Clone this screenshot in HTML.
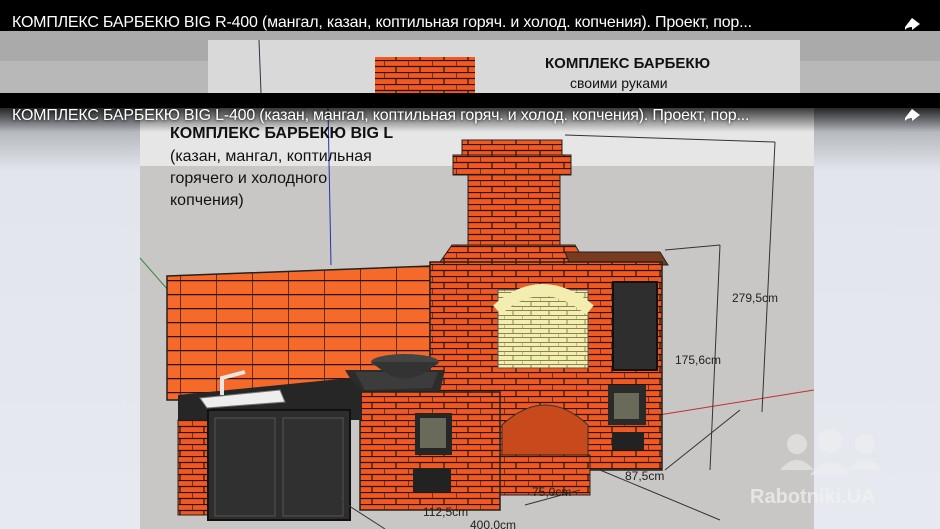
<!DOCTYPE html><html><head><meta charset="utf-8"><style>
html,body{margin:0;padding:0;width:940px;height:529px;overflow:hidden;background:#000;font-family:"Liberation Sans","Noto Sans CJK SC",sans-serif}
.t{position:absolute;left:12px;color:#fff;font-size:16px;white-space:nowrap;letter-spacing:-0.2px}
</style></head><body>
<svg width="940" height="529" style="position:absolute;left:0;top:0" xmlns="http://www.w3.org/2000/svg">
<defs>
<pattern id="br" width="24" height="12" patternUnits="userSpaceOnUse">
<rect width="24" height="12" fill="#f05a22"/>
<path d="M0 0.5H24M0 6.5H24M0 0V6M12 6V12" stroke="#2a1208" stroke-width="1.2"/>
</pattern>
<pattern id="bw" width="36" height="14" patternUnits="userSpaceOnUse">
<rect width="36" height="14" fill="#f56a2a"/>
<path d="M0 0.5H36M0 0V14" stroke="#2a1208" stroke-width="1.4"/>
</pattern>
<pattern id="by" width="18" height="9" patternUnits="userSpaceOnUse">
<rect width="18" height="9" fill="#f3eeb0"/>
<path d="M0 0.5H18M0 4.5H18M0 0V4M9 4V9" stroke="#8a8450" stroke-width="1"/>
</pattern>
<linearGradient id="lm" x1="0" y1="0" x2="0" y2="1"><stop offset="0" stop-color="#9a9da2"/><stop offset="0.15" stop-color="#e2e6ec"/><stop offset="1" stop-color="#e6eaf0"/></linearGradient>
<linearGradient id="ov" x1="0" y1="0" x2="0" y2="1"><stop offset="0" stop-color="#000" stop-opacity=".75"/><stop offset="1" stop-color="#000" stop-opacity="0"/></linearGradient>
</defs>
<rect x="0" y="31" width="940" height="62" fill="#b8b8b8"/>
<rect x="0" y="31" width="940" height="30" fill="#9c9c9c" opacity=".5"/>
<rect x="208" y="40" width="592" height="53" fill="#d9d9d9"/>
<line x1="259" y1="40" x2="261" y2="93" stroke="#334" stroke-width="1"/>
<rect x="375" y="57" width="100" height="36" fill="url(#br)"/>
<text x="545" y="68" font-family="Liberation Sans" font-weight="bold" font-size="15" fill="#111">КОМПЛЕКС БАРБЕКЮ</text>
<text x="570" y="88" font-family="Liberation Sans" font-size="14" fill="#111">своими руками</text>
<rect x="0" y="108" width="940" height="421" fill="url(#lm)"/>
<rect x="140" y="108" width="674" height="421" fill="#c9c7c5"/>
<rect x="140" y="108" width="674" height="58" fill="#e6e6e6"/>
<line x1="328" y1="108" x2="331" y2="265" stroke="#2233aa" stroke-width="1"/>
<line x1="140" y1="258" x2="168" y2="290" stroke="#3a8a4a" stroke-width="1"/>
<line x1="640" y1="418" x2="814" y2="390" stroke="#c03030" stroke-width="1"/>
<polygon points="167,276 430,266 430,400 167,400" fill="url(#bw)" stroke="#222" stroke-width="1.5"/>
<rect x="462" y="140" width="100" height="32" fill="url(#br)" stroke="#222"/>
<rect x="453" y="155" width="118" height="20" fill="url(#br)" stroke="#222"/>
<rect x="468" y="175" width="92" height="70" fill="url(#br)" stroke="#222"/>
<polygon points="452,245 575,245 585,262 440,262" fill="url(#br)" stroke="#222"/>
<polygon points="565,252 660,252 668,265 570,265" fill="#7a3a20" stroke="#222"/>
<rect x="430" y="262" width="232" height="208" fill="url(#br)" stroke="#222" stroke-width="1.5"/>
<rect x="498" y="290" width="90" height="78" fill="url(#by)" stroke="#555"/>
<path d="M497 310 Q542 270 590 310" stroke="#f3eeb0" stroke-width="12" fill="none"/>
<rect x="613" y="282" width="44" height="88" fill="#2e2e2e" stroke="#111" stroke-width="2"/>
<path d="M502 455 V425 Q545 385 588 425 V455" fill="#c84a1c" stroke="#333"/>
<rect x="608" y="385" width="38" height="40" fill="#2a2a2a"/>
<rect x="614" y="393" width="25" height="26" fill="#6a6a5a"/>
<rect x="612" y="432" width="32" height="18" fill="#222"/>
<rect x="498" y="455" width="92" height="40" fill="url(#br)" stroke="#222"/>
<polygon points="345,370 445,370 440,392 360,395" fill="#2c2c2c"/>
<polygon points="355,372 438,372 432,388 365,390" fill="#3c3c3c"/>
<ellipse cx="405" cy="362" rx="34" ry="8" fill="#444"/>
<path d="M372 362 Q405 395 438 362 Z" fill="#333"/>
<rect x="360" y="392" width="140" height="118" fill="url(#br)" stroke="#222" stroke-width="1.5"/>
<rect x="415" y="413" width="37" height="42" fill="#262626"/>
<rect x="420" y="418" width="26" height="30" fill="#6a6a5a"/>
<rect x="413" y="468" width="38" height="24" fill="#222"/>
<polygon points="178,395 350,378 362,390 362,420 178,420" fill="#262626"/>
<polygon points="200,398 280,390 285,402 207,408" fill="#eeeeee" stroke="#777"/>
<path d="M222 395 V378 L245 372" stroke="#e6e6e6" stroke-width="4" fill="none"/>
<rect x="178" y="420" width="30" height="95" fill="url(#br)" stroke="#222"/>
<rect x="208" y="410" width="142" height="110" fill="#2d2d2d" stroke="#111" stroke-width="2"/>
<rect x="215" y="418" width="60" height="98" fill="#303030" stroke="#555"/>
<rect x="283" y="418" width="60" height="98" fill="#303030" stroke="#555"/>
<g stroke="#333" stroke-width="1" fill="none">
<line x1="565" y1="135" x2="775" y2="142"/><line x1="775" y1="142" x2="762" y2="412"/>
<line x1="665" y1="250" x2="720" y2="245"/><line x1="720" y1="245" x2="710" y2="470"/><line x1="740" y1="410" x2="665" y2="470"/>
<line x1="600" y1="470" x2="720" y2="520"/><line x1="580" y1="490" x2="525" y2="505"/>
<line x1="340" y1="500" x2="385" y2="529"/>
</g>
<g font-family="Liberation Sans" font-size="12" fill="#222">
<text x="732" y="302">279,5cm</text><text x="675" y="364">175,6cm</text>
<text x="625" y="480">87,5cm</text><text x="532" y="496">75,0cm</text>
<text x="423" y="516">112,5cm</text><text x="470" y="529">400,0cm</text>
</g>
<g font-family="Liberation Sans" fill="#111">
<text x="170" y="138" font-weight="bold" font-size="16">КОМПЛЕКС БАРБЕКЮ BIG L</text>
<text x="170" y="161" font-size="16">(казан, мангал, коптильная</text>
<text x="170" y="183" font-size="16">горячего и холодного</text>
<text x="170" y="205" font-size="16">копчения)</text>
</g>
<rect x="0" y="108" width="940" height="24" fill="url(#ov)"/>
<g fill="#f0f0f0" opacity=".55">
<circle cx="797" cy="444" r="10"/><path d="M780 470 Q797 450 814 470 Z"/>
<circle cx="830" cy="441" r="12"/><path d="M810 475 Q830 450 850 475 Z"/>
<circle cx="865" cy="444" r="10"/><path d="M848 470 Q865 450 882 470 Z"/>
</g>
<text x="750" y="503" font-family="Liberation Sans" font-weight="bold" font-size="20" fill="#f2f2f2" opacity=".7">Rabotniki.UA</text>
<path d="M905 27 L912 18 L920 24 L912 30 V27 Q907 27 905 30 Z" fill="#fff"/>
<path d="M905 118 L912 109 L920 115 L912 121 V118 Q907 118 905 121 Z" fill="#fff"/>
</svg>
<div class="t" style="top:14px">КОМПЛЕКС БАРБЕКЮ BIG R-400 (мангал, казан, коптильная горяч. и холод. копчения). Проект, пор...</div>
<div class="t" style="top:107px;text-shadow:0 0 3px #000">КОМПЛЕКС БАРБЕКЮ BIG L-400 (казан, мангал, коптильная горяч. и холод. копчения). Проект, пор...</div>
</body></html>
